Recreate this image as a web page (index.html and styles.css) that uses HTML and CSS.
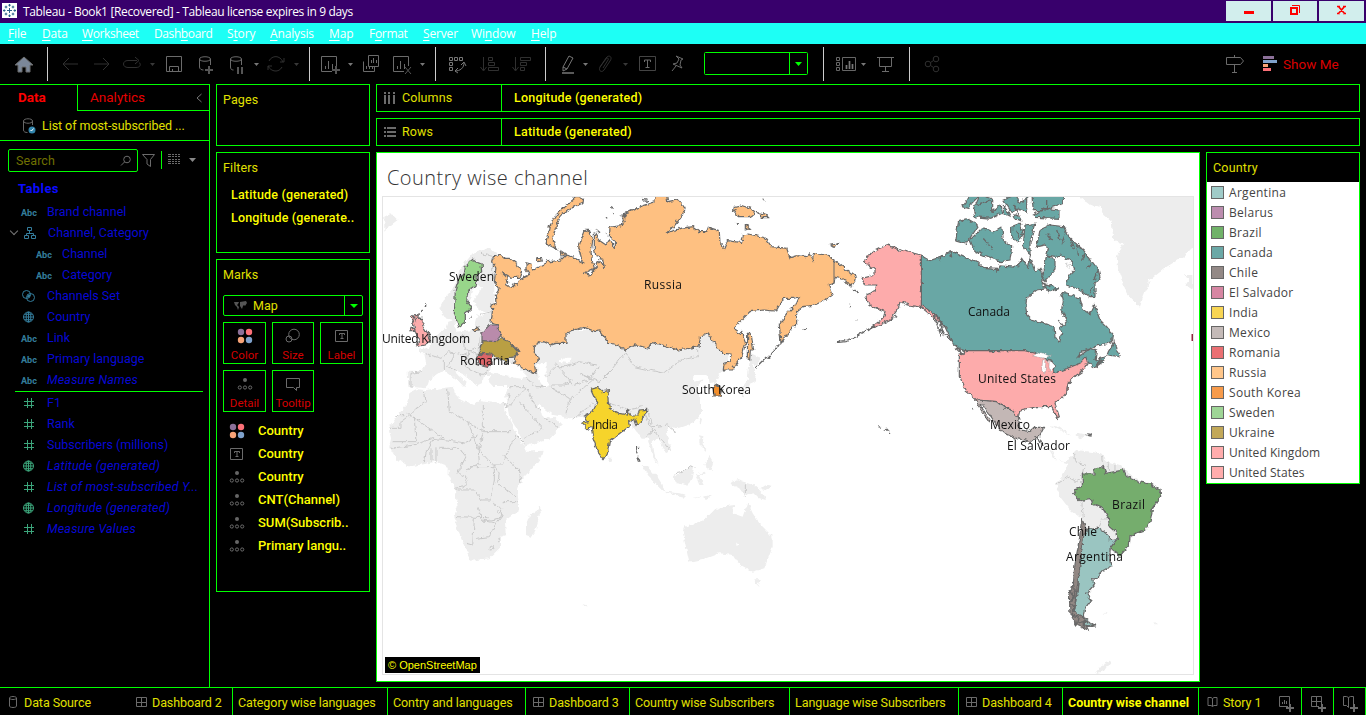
FILE: index.html
```html
<!DOCTYPE html>
<html lang="en">
<head>
<meta charset="utf-8">
<title>Tableau - Book1</title>
<link rel="stylesheet" href="styles.css">
</head>
<body>
<svg class="defs" aria-hidden="true">
  <defs>
    <filter id="coast" x="-2%" y="-2%" width="104%" height="104%" color-interpolation-filters="sRGB"><feTurbulence type="fractalNoise" baseFrequency="0.22" numOctaves="2" seed="4"/><feDisplacementMap in="SourceGraphic" scale="5" xChannelSelector="R" yChannelSelector="G"/></filter>
    <symbol id="abc" viewBox="0 0 18 14"><text x="1" y="11" class="abc-text" textLength="16" lengthAdjust="spacingAndGlyphs">Abc</text></symbol>
    <symbol id="hash" viewBox="0 0 18 14"><path d="M7.500 2v10M11.500 2v10M4 5.500h10M4 9.500h10" class="hash-line"/></symbol>
    <symbol id="globe" viewBox="0 0 18 14"><circle cx="8.500" cy="7" r="5"/><ellipse cx="8.500" cy="7" rx="2.300" ry="5"/><path d="M8.500 2v10M3.500 7h10M4.500 4.300h8M4.500 9.700h8"/></symbol>
    <symbol id="tree" viewBox="0 0 18 14"><path d="M6.500 1.500h4v3h-4zM3.500 9.500h4v3h-4zM10.500 9.500h4v3h-4zM8.500 5v2M5.500 9.500v-2h7v2"/></symbol>
    <symbol id="sets" viewBox="0 0 18 14"><circle cx="6.500" cy="5.500" r="4"/><circle cx="10.500" cy="8.500" r="4"/><path d="M7 8.500c0-2 1-3 3.500-3 0 2-1 3-3.500 3z" class="solid"/></symbol>
    <symbol id="colors" viewBox="0 0 16 16"><circle cx="4" cy="4" r="3.200" fill="#8c7099" stroke="none"/><circle cx="12" cy="4" r="3.200" fill="#fc7078" stroke="none"/><circle cx="4" cy="12" r="3.200" fill="#f7a377" stroke="none"/><circle cx="12" cy="12" r="3.200" fill="#7fa2cc" stroke="none"/></symbol>
    <symbol id="label" viewBox="0 0 16 16"><path d="M1.500 2.500h12v11h-12zM5.500 7V5.500h5V7M8 5.500v5M6.500 10.500h3"/></symbol>
    <symbol id="detail" viewBox="0 0 16 16"><circle cx="8" cy="4" r="2" class="solid"/><circle cx="2.800" cy="11.500" r="1.600"/><circle cx="8" cy="11.500" r="1.600"/><circle cx="13.200" cy="11.500" r="1.600"/></symbol>
    <symbol id="board" viewBox="0 0 12 12"><path d="M.5 1.500h10v9H.5zM5.500 1.500v9M.5 6.500h10"/></symbol>
  </defs>
</svg>

<header class="titlebar">
  <svg class="logo" viewBox="0 0 15 15"><path fill="#fff" d="M0 0h15v15H0z"/><path stroke="#29618b" d="M7.500 5v5M5 7.500h5M7.500 1v2.500M6.300 2.200h2.500M7.500 11.500V14M6.300 12.800h2.500M2.200 6.300v2.500M1 7.500h2.500M12.800 6.300v2.500M11.500 7.500H14M4 2.700v2.600M2.700 4h2.600M11 2.700v2.600M9.700 4h2.600M4 9.700v2.600M2.700 11h2.600M11 9.700v2.600M9.700 11h2.600"/></svg>
  <span class="title-text">Tableau - Book1 [Recovered] - Tableau license expires in 9 days</span>
  <div class="window-buttons">
    <svg viewBox="0 0 45 20"><path d="M18 10h10v3H18z" fill="red"/></svg>
    <svg viewBox="0 0 44 20"><path d="M18 7h6v6h-6z" stroke="red" stroke-width="2"/><path d="M19 4.500h7.500V12" stroke="red"/></svg>
    <svg viewBox="0 0 45 20"><path d="M19.500 5.500l6 7M25.500 5.500l-6 7M18 5.500h3M24 5.500h3M18 12.500h3M24 12.500h3" stroke="red" stroke-width="1.700"/></svg>
  </div>
</header>

<nav class="menubar">
  <span class="m1"><u>F</u>ile</span><span class="m2"><u>D</u>ata</span><span class="m3"><u>W</u>orksheet</span><span class="m4">Dash<u>b</u>oard</span><span class="m5">S<u>t</u>ory</span><span class="m6"><u>A</u>nalysis</span><span class="m7"><u>M</u>ap</span><span class="m8">F<u>o</u>rmat</span><span class="m9"><u>S</u>erver</span><span class="m10">Wi<u>n</u>dow</span><span class="m11"><u>H</u>elp</span>
</nav>

<div class="toolbar">
  <svg width="47" height="34" viewBox="0 47 47 34"><path fill="#7b8799" d="M24 57l9 8h-3v7h-4v-5h-4v5h-4v-7h-3z"/></svg>
  <svg class="tool-group" width="262" height="34" viewBox="48 47 261 34"><g class="dim"><path d="M78 64H63M69 58l-6 6 6 6M94 64h15M103 58l6 6-6 6M137 60.500h-9c-6 0-6 7 0 7h8c5 0 5-4 3-5M135 57l4 3.500-4 3.500"/><path class="fill" d="M150 63h5l-2.500 3zM294 63h5l-2.500 3z"/><path d="M269 61c3-6 11-6 14 1M284 58v4h-4M282 67c-3 6-11 5-14-1M268 70v-4h4"/></g><path d="M166.500 56.500h15v15h-15zM169.500 71.500v-5h9v5M172.500 71v-2M199.500 59v8c0 2 2 3 4 3M210.500 59v6M199.500 59c0-3 11-3 11 0s-11 3-11 0M230.500 59v8c0 2 1 3 3 3M241.500 59v6M230.500 59c0-3 11-3 11 0s-11 3-11 0"/><path d="M209 66v8M205 70h8M238 67v7M242 67v7" stroke-width="2" stroke="#555"/><path class="fill" d="M254 63h5l-2.500 3z"/></svg>
  <svg class="tool-group" width="126" height="34" viewBox="310 47 125 34"><path d="M332 71.500h-10.500v-15h15V67M325.500 69v-3M328.500 69v-8M332.500 69v-5M363.500 61.500v10h11v-5M368.500 55.500h10v11h-10zM366.500 69v-3M369.500 69v-2M372.500 69v-2M371.500 63v-3M373.500 63v-5M376.500 63v-3M404 71.500h-10.500v-15h15V66M397.500 69v-3M400.500 69v-8M404.500 69v-5"/><path d="M336 66v8M332 70h8" stroke="#555" stroke-width="2"/><path d="M405 67l6 7M411 67l-6 7" stroke="#555"/><path class="fill" d="M348 63h5l-2.500 3zM420 63h5l-2.500 3z"/></svg>
  <svg class="tool-group" width="110" height="34" viewBox="436 47 109 34"><path d="M449.500 57.500h3v3h-3zM454.500 57.500h3v3h-3zM459.500 57.500h3v3h-3zM449.500 62.500h3v3h-3zM449.500 67.500h3v3h-3zM464 63c0 5-4 8-9 8M461 65l3-3 2 4M458 68l-3 3 3 2" stroke="#777"/><g class="dim"><path d="M483.500 57v13M480.500 67l3 4 3-4M488.500 57.500h4v3h-4zM488.500 62.500h6v3h-6zM488.500 67.500h10v3h-10zM515.500 57v13M512.500 67l3 4 3-4M520.500 57.500h10v3h-10zM520.500 62.500h6v3h-6zM520.500 67.500h4v3h-4z"/></g></svg>
  <svg class="tool-group" width="278" height="34" viewBox="546 47 277 34"><path d="M569 56l4 2-6 11-4 2v-4zM563 67l4 2" stroke="#777"/><path d="M562 73h12" stroke="#777" stroke-width="1.500"/><path class="fill" d="M583 63h5l-2.500 3z"/><g class="dim"><path d="M600 67l6-9c3-4 7-1 4 3l-6 9c-2 3-6 1-4-3l6-8c2-2 3 0 2 1l-5 8"/><path class="fill" d="M623 63h5l-2.500 3z"/></g><path d="M639.500 56.500h16v14h-16z" stroke="#444"/><path d="M644.500 62v-2h6v2M647.500 60v7M645.500 67.500h4M676 56l7 3-2 1-1 5 2 3-9-4 4-1 2-4zM676 66l-4 5"/><path d="M705.500 52.500h101a1 1 0 0 1 1 1v20a1 1 0 0 1-1 1h-101a1 1 0 0 1-1-1v-20a1 1 0 0 1 1-1zM789.500 52.500v22" stroke="#0f0"/><path d="M795 62h7l-3.500 4z" fill="#0f0" stroke="none"/></svg>
  <svg class="tool-group" width="86" height="34" viewBox="824 47 85 34"><path d="M836.500 57.500h3v3h-3zM836.500 62.500h3v3h-3zM836.500 67.500h3v3h-3zM842.500 57.500h13v13h-13z" stroke="#666"/><path d="M846.500 69v-4M849.500 69v-8M852.500 69v-5" stroke="#777" stroke-width="1.700"/><path class="fill" d="M861 63h5l-2.500 3z"/><path d="M877 57.500h17M879.500 58v8.500h12V58M885.500 67v4M882 71.500h7"/></svg>
  <svg class="tool-group last" width="317" height="34" viewBox="910 47 316 34"><g class="dim"><circle cx="928" cy="64" r="2.800"/><circle cx="936" cy="59" r="2.800"/><circle cx="936" cy="69" r="2.800"/><path d="M930.500 62.500l3-2M930.500 65.500l3 2"/></g></svg>
  <svg class="guide-icon" width="37" height="34" viewBox="1226 47 37 34"><path d="M1234.500 55v2M1226.500 57.500h14l3 3.500-3 3.500h-14zM1234.500 65v7M1232 72.500h5"/></svg>
  <svg width="17" height="34" viewBox="1263 47 17 34" class="showme-icon"><path fill="#8c7099" d="M1263 56h11v3h-11z"/><path fill="#7fa2cc" d="M1263 60h14v3h-14z"/><path fill="#f7a377" d="M1263 64h5v3h-5z"/><path fill="#fc7078" d="M1263 68h8v3h-8z"/></svg>
  <span class="showme">Show Me</span>
</div>

<main class="workspace">
  <aside class="data-pane">
    <div class="pane-tabs"><b>Data</b><div class="analytics"><span>Analytics</span><svg width="6" height="10"><path d="M5.500 1L1 5l4.500 4" stroke="#777"/></svg></div></div>
    <div class="source"><svg width="15" height="16"><path d="M1.500 3v9c0 2 2 2.500 4 2.500M10.500 3v4M1.500 3c0-3 9-3 9 0s-9 3-9 0" stroke="#666"/><circle cx="10" cy="12" r="3.500" fill="#3285ad" stroke="none"/><path d="M8.500 12l1 1 2-2.500" stroke="#fff"/></svg><span>List of most-subscribed ...</span></div>
    <div class="search-row">
      <div class="search"><span>Search</span><svg width="12" height="12"><circle cx="7" cy="4.500" r="3.300"/><path d="M4.500 7L1 10.500"/></svg></div>
      <svg width="14" height="22"><path d="M.5 5.500h12L8.500 10.500v7L5 15v-4.500z"/></svg>
      <i></i>
      <svg width="12" height="22"><path d="M0 5.500h12M0 7.500h12M0 10.500h12M0 12.500h12M0 14.500h12" stroke-dasharray="3 1 2 1 2 1 2 0"/></svg>
      <svg width="7" height="22" class="caret"><path d="M0 9h7l-3.500 4z" fill="#888" stroke="none"/></svg>
    </div>
    <div class="tables">Tables</div>
    <ul class="fields dims">
      <li><svg><use href="#abc"/></svg><span>Brand channel</span></li>
      <li class="open"><svg><use href="#tree"/></svg><span>Channel, Category</span></li>
      <li class="child"><svg><use href="#abc"/></svg><span>Channel</span></li>
      <li class="child"><svg><use href="#abc"/></svg><span>Category</span></li>
      <li><svg><use href="#sets"/></svg><span>Channels Set</span></li>
      <li><svg><use href="#globe"/></svg><span>Country</span></li>
      <li><svg><use href="#abc"/></svg><span>Link</span></li>
      <li><svg><use href="#abc"/></svg><span>Primary language</span></li>
      <li><svg><use href="#abc"/></svg><em>Measure Names</em></li>
    </ul>
    <ul class="fields measures">
      <li><svg><use href="#hash"/></svg><span>F1</span></li>
      <li><svg><use href="#hash"/></svg><span>Rank</span></li>
      <li><svg><use href="#hash"/></svg><span>Subscribers (millions)</span></li>
      <li><svg><use href="#globe"/></svg><em>Latitude (generated)</em></li>
      <li><svg><use href="#hash"/></svg><em>List of most-subscribed Y...</em></li>
      <li><svg><use href="#globe"/></svg><em>Longitude (generated)</em></li>
      <li><svg><use href="#hash"/></svg><em>Measure Values</em></li>
    </ul>
  </aside>

  <section class="cards">
    <div class="card pages"><h3>Pages</h3></div>
    <div class="card filters"><h3>Filters</h3><p>Latitude (generated)</p><p>Longitude (generate..</p></div>
    <div class="card marks">
      <h3>Marks</h3>
      <div class="mark-type"><svg width="13" height="10"><path fill="#555" d="M0 1h5l-1 2-1 1 2 2-1 3-1-3-2-2zM6 1l6-1 1 2-2 3-1-1-1 1-1 3-2-3z"/></svg><span>Map</span><i></i></div>
      <div class="mark-grid">
        <div><svg><use href="#colors"/></svg>Color</div>
        <div><svg viewBox="0 0 16 16"><circle cx="9" cy="6.500" r="5.300"/><circle cx="4" cy="11" r="3"/></svg>Size</div>
        <div><svg><use href="#label"/></svg>Label</div>
        <div><svg><use href="#detail"/></svg>Detail</div>
        <div><svg viewBox="0 0 16 16"><path d="M1.500 2.500h13v9h-3v3l-3-3h-7z"/></svg>Tooltip</div>
      </div>
      <ul class="pills">
        <li><svg><use href="#colors"/></svg>Country</li>
        <li><svg><use href="#label"/></svg>Country</li>
        <li><svg><use href="#detail"/></svg>Country</li>
        <li><svg><use href="#detail"/></svg>CNT(Channel)</li>
        <li><svg><use href="#detail"/></svg>SUM(Subscrib..</li>
        <li><svg><use href="#detail"/></svg>Primary langu..</li>
      </ul>
    </div>
  </section>

  <section class="sheet">
    <div class="shelf"><div><svg width="12" height="12"><path d="M1 0v2M5 0v2M10 0v2M1 3v9M5 3v9M10 3v9" stroke-width="2"/></svg>Columns</div><b>Longitude (generated)</b></div>
    <div class="shelf"><div><svg width="12" height="12"><path d="M0 2h2M0 6h2M0 10h2M3 2h9M3 6h9M3 10h9" stroke-width="2"/></svg>Rows</div><b>Latitude (generated)</b></div>
    <div class="view-row">
      <div class="viz">
        <h1>Country wise channel</h1>
        <svg class="map" viewBox="383 197 810 477">
          <g filter="url(#coast)">
          <g class="land" transform="translate(376 350) scale(.33333)">
            <path d="M190-125L205-155 235-190 250-240 290-290 340-307 365-290 355-200 355-115 320-115 300-130 295-150 318-185 300-200 290-185 275-130 250-70 232-90 210-95z"/>
            <path d="M345-115L300-95 292-60 240-55 235-90 217-85 210-65 190-50 165-30 160-10 130 0 145 15 150 40 135 65 95 65 97 110 120 112 145 115 155 105 160 90 180 75 205 60 225 75 245 90 265 112 272 98 245 75 240 62 260 70 285 90 300 108 320 98 325 75 345 75 338 95 350 108 400 108 387 135 400 200 430 250 445 290 520 265 558 225 535 200 505 205 482 165 490 165 530 195 580 205 620 200 700 180 760 215 785 250 800 270 815 265 830 320 848 345 835 310 830 275 845 260 870 310 885 290 870 250 880 230 905 235 950 220 975 190 975 150 955 115 985 85 955 95 950 75 990 75 1000 95 1010 100 1030 130 1020 100 1030 75 1042 62 1065 0 1000-60 500-60z"/>
            <path d="M120 118L150 120 235 110 235 130 255 150 295 165 310 150 385 160 385 180 400 210 425 255 445 290 450 305 500 302 495 320 470 355 430 395 425 430 430 480 390 510 392 555 375 560 375 590 340 625 285 632 270 600 245 540 235 500 245 470 235 410 218 375 218 350 180 335 100 350 60 325 40 290 45 265 38 235 70 190 90 165 105 125z"/>
            <path d="M490 467l5 15-20 70-10 8-15-5 0-30 10-30 15-5zM920 545L925 530 985 510 1015 480 1040 470 1075 465 1070 490 1100 500 1115 455 1130 490 1150 520 1190 560 1190 590 1165 655 1130 665 1085 640 1070 615 1030 610 990 625 940 635 932 600zM1135 685l20 0-8 25z"/>
            <path d="M1100 110l15-20 5-50 10-5 10 40-5 25-25 10-10 30-10-20zM1120 35l5-25 30 15-15 20zM970 205l8 5-5 20zM970 255l12 3-2 25 15 15-5 5-20-20zM985 345l15-30 12 20-8 25zM797 345l20 5 30 35 25 40-15-5-30-30zM893 375l15 0 20-15 15-15 12 5-10 40-15 15-30-5zM960 375l25-10 5 5-22 5 15 30-10 0-8-20zM1060 400l25-10 50 15 25 25 10 20-20-5-15-15-30 5-15-20-20-10zM870 425l40 5 20 5-5 5-50-10zM700 320l8 15-8 5-6-10zM950 440l25-2-5 5zM980 440l30-5-20 12zM1150 415l25-10 10 3-20 15zM620 763l12 3-8 4zM1230 445l15 8zM25-380l0-20 20-10 20 20-20 15-20 20z"/>
          </g>
          <g class="land" transform="translate(850 190) scale(.33333)"><path d="M690 22L720 45 750 50 760 75 785 95 790 150 820 160 800 200 805 240 830 310 870 350 880 320 900 270 950 230 1000 200 1030 170 1040 170 1040 10 690 10zM1005 255l25 0 0 45-25-15 10-15zM595 705l30 5 40 28-30-15zM675 735l15-5 25 5-25 10zM560 755l40 20 20 35 50 15 5-10-60-5-25-45z"/></g>
          <g class="land" transform="translate(1020 430) scale(.33333)"><path d="M150 80L172 60 240 70 265 95 300 105 315 120 420 200 300 378 270 360 190 300 185 265 155 245 120 200 108 160 130 135zM250 552l10-8-5 10zM400 575l12 8-8 0zM225 730l20-25 30-12-20 30z"/></g>
          <g fill="#fff" transform="translate(376 350) scale(.33333)"><path d="M340 65L350 35 375 25 420 45 455 80 440 87 370 75zM482 45l30-10 0 30-5 10 12 35-15 5-15-25zM550 35l20-15 20 0-15 20zM225 85l-5-10-15-10 0 15-8 15zM1080 580l8 8-6 0z"/></g>
          <g class="borders" transform="translate(376 350) scale(.33333)"><path d="M145 125l5 30-35 25-20 20-20 15 0 20-35 0M95 190l115 80M55 197h30M215 115l5 70 55 30 45 30M322 165v80h82M385 160l5 15M275 215l30 80M115 200l5 75-70 0M45 295l70-10 55-20 45 5 55 10 35-25M170 270l-20 40-5 25M180 295l0 45M165 295l0 40M190 295l60 0 20 25-25 50M305 280l5 60-40 20M320 250l-10 50 40 45 30 0 20-50 20-40 25 25M380 315l15 15 35 30 5 40M355 345l15 25-5 30 55 40M280 350l75 0 0 40-10 60-30 0-20-30-50 0M250 370l25 15-10 25-30 5M350 460l30 15-10 30-50 10-15-45M380 455l45 0M240 500l95 3M295 505l-5 80-20-5M320 510l40 10-20 40-40 5M365 515l15-20-20-15M340 590a7 7 0 1 0 10-3zM365 565l5 10M135 65l-30 5 0 40M145 10l50 15 25-20 40 10 40-20M205 30l0 30M235 10l-20 40 30 15M260-45l5 40 40 20M310-40l-5 60 40 30M280 0l-10 50 45 25 30-15M400 110l50 0 30 60 15 10M400 130l-10 45 60-60M430 155l70 80-55 30M450 80l30 30 30 0M520 110l60 35-10 45M525 105l40 0 25-15M510 80l30-30 30 0 40-15 50 10M610 70l40 20-70 60M620 75l50 20 40-40 35-45M540 40l50 65 50-15 30-40M745 0l30 50 90 20 50-40 50-10 0-20M670 180l-20-20-60 50M700 160l60 20 40-10M780 230l20-50 30 60-15 20M820 190l10 40 45-5 25 20M835 240l25 35 20 25M1108 400v40M895 372l25-5 20-20 15 5M505 205l40 25M345-115l-40 10M350-210l0-70-35-10"/></g>
          <g class="borders" transform="translate(1020 430) scale(.33333)"><path d="M160 70l5 25 30 10-5 30M110 165l30-25 30 15 15-10M185 210l5 55M245 80l5 35M265 100l0 25M285 105l0 20M235 295l10-25 20 0M268 330l20-5M270 360l30 18"/></g>

          <g transform="translate(376 190) scale(.33333)">
            <path class="russia" d="M355 200L370 193 385 205 400 205 425 225 437 245 430 262 405 262 375 245 392 262 395 275 390 283 405 293 413 290 410 282 425 285 430 270 445 262 460 255 450 240 450 218 465 222 470 240 480 235 505 222 520 215 555 210 570 195 590 200 620 220 608 170 625 125 640 120 650 150 645 190 650 215 655 235 625 250 640 257 662 230 668 210 685 235 680 205 660 200 655 175 655 130 668 150 690 165 700 150 718 175 718 155 700 140 702 112 745 105 737 88 752 70 792 50 837 35 837 5 870 5 875 35 907 28 927 55 917 80 897 105 870 130 912 115 952 110 972 125 992 125 997 112 1030 122 1032 160 1044 175 1054 152 1097 158 1102 135 1117 132 1167 143 1187 170 1232 175 1242 203 1262 197 1292 200 1300 192 1310 212 1312 190 1352 195 1374 210 1412 240 1442 262 1437 278 1422 288 1407 270 1377 262 1374 280 1357 285 1369 318 1317 345 1282 350 1262 365 1262 400 1237 425 1215 460 1210 405 1232 370 1262 340 1270 320 1252 325 1222 325 1200 363 1162 360 1122 365 1072 415 1097 430 1109 460 1097 500 1067 540 1042 540 1044 520 1062 515 1065 492 1042 490 1017 465 997 432 974 437 969 470 907 480 827 455 817 475 780 465 747 480 717 462 697 460 672 423 658 425 625 412 590 420 570 430 570 460 540 460 525 465 500 455 475 470 475 490 490 505 475 520 480 553 440 535 412 520 428 485 420 472 375 440 372 425 365 405 345 400 350 355 345 345 360 340 358 315 368 300 355 275 360 235 350 215z"/>
            <path class="russia" d="M510 160L520 110 540 75 565 50 600 22 620 25 618 40 585 55 555 75 540 110 530 140 535 165 543 178zM483 203l10 0 3 10-10 2zM555 183l15 10-12 5zM290 418l12-7 10 8-18 3zM630 118l10 0-3 8zM1075 50l20-5 30 10 12 15-15 10-35 0-15-15zM1145 68l25 5 5 10-15 0zM1108 105l15 10-15 5zM1365 165l25-5-15 12zM1115 430l10 0 8 50-10 0-2 30-7-5z"/>
            <path class="scribble" d="M705 50l8 5M710 70l3 3M735 80l12-10-2 25M690 85l3 3M660 118l10 8-8 3M690 128l2 3M800 25l12 3M805 32l8 3M1075 60l3 3M1080 98l3 3M1160 30l5 0M1430 300l15 5M1420 345l3 3M1200 475l10-15M1165 510l15-10M1140 535l15-15M1150 525l50-50M1280 415l10 5M1440 390l3 3"/>
            <path class="sweden" d="M290 208L300 215 315 220 317 245 300 260 302 285 275 305 272 335 285 355 268 370 268 395 248 410 235 370 238 300 248 270 265 250 268 230z"/>
            <path class="belarus" d="M318 430L340 405 365 405 375 435 360 455 318 455z"/>
            <path class="ukraine" d="M310 480L320 452 360 455 375 445 400 455 428 485 420 500 390 505 395 520 350 495 310 495z"/>
            <path class="romania" d="M302 505L320 490 345 492 352 520 335 532 308 525z"/>
            <path class="pink" d="M105 380L130 375 128 385 142 385 140 405 155 430 160 455 145 465 120 470 130 455 120 430 110 395zM105 415l12 0-3 10-12 0z"/><path class="scribble" d="M135 365l5-5M147 350l3-7M110 375l10 25M115 390l10-10M280 385l5-8"/>
          </g>
          <path class="russia korea" d="M718 385l4 4-2 7-6 0-1-8z"/>
          <path class="india" transform="translate(376 350) scale(.33333)" d="M645 118L665 112 680 125 700 122 695 140 700 175 730 190 755 195 755 180 765 195 785 195 790 180 812 178 812 190 800 200 795 220 782 225 775 205 758 215 760 230 745 240 700 275 695 305 682 328 665 305 650 260 645 230 635 238 618 220 635 215 625 195 650 185 665 155 655 140z"/>
          <path class="scribble" transform="translate(376 350) scale(.33333)" d="M785 290l-3 20M785 320l7 18"/>
          <g transform="translate(850 190) scale(.33333)">
            <path class="canada" d="M214 197L240 212 275 200 305 185 350 205 385 215 400 232 440 235 440 250 450 228 500 232 515 205 535 235 540 205 555 245 570 235 580 265 575 290 600 295 560 300 530 325 527 350 530 375 545 390 580 400 612 410 615 440 628 458 635 430 630 415 650 395 635 360 640 330 635 310 665 315 690 325 700 360 720 372 733 345 750 390 770 410 790 435 788 455 735 470 695 485 680 505 720 475 740 480 735 510 765 500 760 515 730 535 720 520 705 500 690 520 640 540 610 550 615 530 600 510 565 500 525 482 343 482 310 465 285 410 250 370 214 350z"/>
            <path class="canada" d="M560 170L570 120 600 105 640 110 660 145 700 180 715 200 745 240 750 260 735 280 735 320 720 320 690 300 650 285 650 270 675 240 665 215 635 195 620 200 590 195 595 180 585 165zM360 150L395 115 430 125 455 110 460 150 485 170 480 210 450 215 400 195 375 185zM325 95L355 88 385 105 350 160 318 150zM485 110l25-10 10 30-15 30-20-20zM525 105l30-5-15 60 0 35-20-30zM575 260l15-65 25 15 0 30-30 35zM580 280l45 15-25 10zM335 50l25-35 30 0-25 25-10 15zM370 60l20-45 35 10 0 40 25-20 5 25-30 15-50-5zM460 30l40-15 10 27 20-27 0 52-25-10-20 10zM545 10l95 0 0 30-60 22-30 0zM550 75l35-20 45 5 0 25-75-3zM460 48l15 18 5 15-20-10zM490 80l15-8 10 20-20-4zM775 485l18-28 5 20 14 20-8 5-34-5zM750 510l10 0-20 15z"/>
            <path class="us" d="M328 490L343 492 343 482 525 482 560 492 575 500 600 510 615 530 610 550 640 540 690 520 708 500 712 520 695 545 680 555 655 580 655 600 640 620 615 640 628 680 620 685 605 650 560 650 510 660 505 680 480 655 465 655 440 635 380 630 345 600 328 560z"/>
            <path class="us" d="M214 195L150 180 110 165 60 190 42 215 75 240 75 255 35 265 45 285 80 285 75 305 48 315 50 335 70 350 105 365 100 385 60 415 85 408 120 390 145 355 150 335 175 345 214 352 285 410 250 370 214 345z"/>
            <path class="mexico" d="M380 630L440 635 465 655 480 655 505 680 510 720 540 725 555 712 582 712 570 735 545 755 500 745 455 725 430 690 400 645 390 645 420 690 415 695 385 650z"/>
            <path d="M548 498l20-12 35 12-20 7zM578 510l10-3-3 42-10-7zM598 510l17 20-15 15-3-15zM645 225l18-5-5 15z" fill="#fff" stroke="#777"/>
            <path class="scribble" d="M-40 455l25-3 30-10 45-27M120 390l20-15M250 370l15 45 15 15-10-35 15 15M258 375l20 35M268 420l5 20M285 430l25 30M315 460l25 35-25-22M275 195l-5 15M300 180l5 25M590 130l15 20M620 120l10 30M645 135l-10 25M660 145l10 30M680 165l5 30M705 190l-10 20M725 220l-15 15M745 240l-15 30M730 290l-15 20M380 45l40-15M490 45l20 30M590 30l0 25M495 120l15 20M400 145l25 30M370 655l-3 3M85 710l8 2M105 715l15 15M710 736l15 2M550 740l20 10 10 20M625 390l10 15M735 530l20-20M650 600l5-25"/>
          </g>
          <g transform="translate(1020 430) scale(.33333)">
            <path class="brazil" d="M187 132L222 132 222 118 250 110 258 130 300 122 310 115 320 140 355 155 390 162 420 180 422 200 398 235 390 275 375 300 350 308 330 320 328 345 300 378 270 355 292 325 288 308 268 290 265 262 248 235 218 222 215 208 180 215 160 195 165 180 187 172z"/>
            <path class="argentina" d="M200 298L235 295 268 315 268 330 292 325 270 355 270 385 272 410 238 430 235 445 218 448 222 465 200 490 213 510 195 535 190 555 200 575 228 588 190 590 162 545 170 500 180 400 190 320z"/>
            <path class="chile" d="M185 265L195 290 200 300 190 320 180 400 172 470 162 545 190 560 195 580 205 600 170 585 150 550 148 500 160 460 165 400 178 330z"/>
            <path class="scribble" d="M150 480l10 20-10 20 15 10-10 25 20 5-5 20 20-5 0 20 10-25-15-10M160 460l5 40-10 15M218 460l8 2M205 588l20-2M200 12l15 2"/>
          </g>
          </g>
          <path class="straight" d="M834 260v23M921.500 255.500v51M964 350.500h61"/>
          <path d="M1192.500 334v7" stroke="#90243e" stroke-width="2"/>
          <g class="map-labels">
            <text x="449" y="281" textLength="45">Sweden</text><text x="382" y="343" textLength="88">United Kingdom</text><text x="460" y="365" textLength="50">Romania</text><text x="644" y="289" textLength="38">Russia</text><text x="682" y="394" textLength="69">South Korea</text><text x="592" y="429" textLength="26">India</text><text x="968" y="316" textLength="42">Canada</text><text x="978" y="383" textLength="78">United States</text><text x="990" y="429" textLength="40">Mexico</text><text x="1007" y="450" textLength="63">El Salvador</text><text x="1112" y="509" textLength="33">Brazil</text><text x="1069" y="536" textLength="28">Chile</text><text x="1066" y="561" textLength="57">Argentina</text>
          </g>
        </svg>
        <span class="credit">© OpenStreetMap</span>
      </div>
      <div class="legend"><h3>Country</h3><ul>
        <li><i class="argentina"></i>Argentina</li><li><i class="belarus"></i>Belarus</li><li><i class="brazil"></i>Brazil</li><li><i class="canada"></i>Canada</li><li><i class="chile"></i>Chile</li><li><i class="salvador"></i>El Salvador</li><li><i class="india"></i>India</li><li><i class="mexico"></i>Mexico</li><li><i class="romania"></i>Romania</li><li><i class="russia"></i>Russia</li><li><i class="korea"></i>South Korea</li><li><i class="sweden"></i>Sweden</li><li><i class="ukraine"></i>Ukraine</li><li class="tight"><i class="us"></i>United Kingdom</li><li class="tight"><i class="us"></i>United States</li>
      </ul></div>
    </div>
  </section>
</main>

<footer class="tabs">
  <div class="w129 plain"><svg viewBox="0 0 12 12"><path d="M1.500 2v8c0 2 7 2 7 0V2M1.500 2c0-2 7-2 7 0s-7 2-7 0"/></svg><span>Data Source</span></div>
  <div class="w104"><svg><use href="#board"/></svg><span>Dashboard 2</span></div>
  <div class="w155"><span>Category wise languages</span></div>
  <div class="w138"><span>Contry and languages</span></div>
  <div class="w104"><svg><use href="#board"/></svg><span>Dashboard 3</span></div>
  <div class="w160"><span>Country wise Subscribers</span></div>
  <div class="w170"><span>Language wise Subscribers</span></div>
  <div class="w104"><svg><use href="#board"/></svg><span>Dashboard 4</span></div>
  <div class="w136 active"><span>Country wise channel</span></div>
  <div class="w71 plain"><svg viewBox="0 0 12 12"><path d="M1 1.500h3l1.500 1 1.500-1h3v8H7l-1.500 1-1.500-1H1zM5.500 2.500v8"/></svg><span>Story 1</span></div>
  <div class="w32 add"><svg viewBox="0 0 18 18"><path d="M11 12.500H2.500v-10h10V10M5.500 10V8M7.500 10V6M9.500 10V7"/><path d="M13 10v8M9 14h8" stroke-width="2"/></svg></div>
  <div class="w32 add"><svg viewBox="0 0 18 18"><path d="M10 12.500H2.500v-10h10V10M7.500 2.500v10M2.500 7.500h10"/><path d="M13 10v8M9 14h8" stroke-width="2"/></svg></div>
  <div class="w32 add"><svg viewBox="0 0 18 18"><path d="M2.500 2.500h3l2 1 2-1h3V10M2.500 2.500v9h3l2 2V3.500"/><path d="M13 10v8M9 14h8" stroke-width="2"/></svg></div>
</footer>
</body>
</html>
```
FILE: styles.css
```css
* { box-sizing: border-box; }
body { margin: 0; width: 1366px; height: 715px; overflow: hidden; background: #000; color: #e0e000; font-family: Roboto, sans-serif; font-size: 12.5px; display: flex; flex-direction: column; }
h1, h3, p, ul { margin: 0; padding: 0; font-weight: 400; }
ul { list-style: none; }
svg { flex: none; fill: none; stroke: #6b6b6b; stroke-width: 1; }
.defs { position: absolute; width: 0; height: 0; }
.solid { fill: currentColor; stroke: none; }

.titlebar { height: 23px; background: #38006c; display: flex; align-items: center; padding-left: 2px; color: #fff; font: 12px "Open Sans", sans-serif; }
.logo { width: 15px; height: 15px; margin-right: 6px; margin-bottom: 2px; stroke: none; }
.title-text { letter-spacing: -.35px; }
.window-buttons { margin: 1px 2px auto auto; display: flex; gap: 2px; }
.window-buttons svg { height: 20px; width: 45px; background: #d2eeed; stroke: none; }
.window-buttons svg:nth-child(2) { width: 44px; }

.menubar { height: 21px; background: #1dfff5; display: flex; align-items: center; padding-left: 8px; color: #fff; font: 12px "Open Sans", sans-serif; white-space: nowrap; }
.menubar u { text-underline-offset: 2px; }
.menubar span { flex: none; letter-spacing: -.15px; }
.menubar .m3 { letter-spacing: -.4px; }
.menubar .m4 { letter-spacing: -.4px; }
.menubar .m8 { letter-spacing: -.3px; }
.m1 { width: 34px; } .m2 { width: 40px; } .m3 { width: 72px; } .m4 { width: 73px; } .m5 { width: 43px; } .m6 { width: 59px; } .m7 { width: 40px; } .m8 { width: 54px; } .m9 { width: 48px; } .m10 { width: 60px; }

.toolbar { height: 40px; display: flex; align-items: center; }
.toolbar .fill { fill: #777; stroke: none; }
.toolbar .dim { stroke: #303030; }
.toolbar .dim .fill { fill: #383838; }
.tool-group { border-left: 1px solid #ccc; }
.showme-icon { stroke: none; }
.showme { color: #d90000; font-size: 13.5px; margin-left: 3px; line-height: 16px; margin-bottom: 1px; }

.workspace { height: 603px; display: flex; }
.data-pane { width: 210px; border: 1px solid #0f0; border-width: 1px 1px 0 0; flex: none; }
.pane-tabs { height: 26px; display: flex; color: #e60000; font-size: 13.5px; line-height: 25px; }
.pane-tabs b { width: 77px; padding-left: 18px; color: #f00; }
.analytics { flex: 1; border: 1px solid #0f0; border-width: 0 0 1px 1px; display: flex; justify-content: space-between; align-items: center; padding: 0 7px 0 12px; }
.source { height: 30px; border-bottom: 1px solid #0f0; display: flex; align-items: center; padding-left: 22px; gap: 5px; letter-spacing: -.06px; }
.search-row { display: flex; padding: 8px 0 0 8px; height: 31px; }
.search { width: 130px; height: 23px; border: 1px solid #0f0; border-radius: 2px; display: flex; align-items: center; justify-content: space-between; padding: 0 5px 0 7px; color: #707000; margin-right: 4px; letter-spacing: .1px; }
.search-row i { width: 1px; height: 18px; background: #0f0; margin: 2px 6px 0 5px; }
.search-row .caret { margin-left: 9px; }
.tables { color: #0b0bff; font-weight: 700; height: 29px; line-height: 33px; padding-left: 18px; font-size: 13px; letter-spacing: .4px; }
.fields { color: #0808d4; letter-spacing: 0; }
.fields em { letter-spacing: .18px; }
.fields li { height: 21px; display: flex; align-items: center; padding-left: 20px; gap: 9px; white-space: nowrap; }
.fields .child { padding-left: 35px; }
.fields svg { width: 18px; height: 14px; stroke: #347d9c; color: #347d9c; }
.fields .open::before { content: ""; width: 5px; height: 5px; border: 1px solid #777; border-width: 0 1px 1px 0; transform: rotate(45deg); margin: 0 -5px 3px -9px; }
.dims { height: 189px; margin-bottom: 1px; }
.abc-text { font: 700 9px Roboto, sans-serif; fill: #347d9c; stroke: none; }
.measures::before { content: ""; display: block; width: 188px; height: 1px; margin-left: 15px; background: #0f0; }
.measures svg { stroke: #3ca57b; }

.cards { width: 154px; margin-left: 6px; display: flex; flex-direction: column; flex: none; gap: 6px; }
.card { width: 154px; border: 1px solid #0f0; padding: 7px 6px 0; flex: none; }
.card h3 { font-size: 12.5px; line-height: 15px; letter-spacing: .1px; }
.pages { height: 62px; }
.filters { height: 101px; }
.filters h3 { margin-bottom: 8px; }
.filters p { padding-left: 8px; height: 23px; line-height: 23px; color: #ff0; font-weight: 500; letter-spacing: .18px; white-space: nowrap; }
.marks { height: 333px; }
.mark-type { height: 21px; width: 140px; margin: 13px 0 6px; border: 1px solid #0f0; border-radius: 2px; display: flex; align-items: center; padding-left: 10px; gap: 6px; }
.mark-type svg { stroke: none; }
.mark-type i { margin-left: auto; width: 18px; height: 19px; border-left: 1px solid #0f0; display: flex; align-items: center; justify-content: center; }
.mark-type i::after { content: ""; border: 4px solid transparent; border-top-color: #0f0; border-bottom: 0; }
.mark-grid { display: grid; grid-template-columns: 43px 42px 43px; gap: 6px; width: 140px; }
.mark-grid div { height: 42px; border: 1px solid #0f0; display: flex; flex-direction: column; align-items: center; justify-content: space-between; padding: 5px 0 1px; color: #d40000; font-size: 11.500px; line-height: 14px; white-space: nowrap; }
.mark-grid svg, .pills svg { width: 16px; height: 16px; color: #666; }
.pills { padding: 7px 0 0 6px; }
.pills li { height: 23px; display: flex; align-items: center; gap: 13px; color: #ff0; font-weight: 500; font-size: 13px; white-space: nowrap; }

.sheet { margin-left: 6px; width: 984px; display: flex; flex-direction: column; gap: 6px; flex: none; }
.shelf { height: 28px; border: 1px solid #0f0; display: flex; align-items: center; flex: none; }
.shelf > div { width: 125px; height: 26px; border-right: 1px solid #0f0; display: flex; align-items: center; padding: 0 0 1px 7px; gap: 6px; letter-spacing: .1px; }
.shelf b { color: #ff0; font-weight: 500; padding: 0 0 1px 12px; font-size: 12.5px; letter-spacing: .2px; }
.view-row { display: flex; gap: 6px; align-items: flex-start; }
.viz { width: 824px; height: 530px; border: 1px solid #0f0; background: #fff; padding: 9px 5px 0; position: relative; }
.viz h1 { font: 300 20px/34px "Open Sans", sans-serif; color: #333; padding-left: 5px; letter-spacing: .45px; margin: -1px 0 1px; }
.map { display: block; width: 812px; height: 479px; border: 1px solid #e4e4e4; stroke: none; }
.credit { position: absolute; left: 8px; top: 504px; width: 95px; height: 16px; padding-left: 3px; background: #000; color: #ff0; font: 11px/16px "Liberation Sans", sans-serif; white-space: nowrap; }
.land path { fill: #ededed; }
.borders path { stroke: #c9c9c9; fill: none; vector-effect: non-scaling-stroke; }
.scribble { stroke: #686868; stroke-width: 4; }
.straight { stroke: #686868; }
.map .russia, .map .canada, .map .us, .map .mexico, .map .brazil, .map .argentina, .map .chile, .map .india, .map .sweden, .map .belarus, .map .ukraine, .map .romania, .map .pink { stroke: #686868; stroke-width: 1.2; vector-effect: non-scaling-stroke; }
.map-labels { font: 12px "Open Sans", sans-serif; fill: #111; }
.legend { width: 154px; height: 332px; border: 1px solid #0f0; background: #fff; }
.legend h3 { height: 29px; background: #000; line-height: 30px; padding-left: 6px; letter-spacing: .2px; font-size: 12.5px; }
.legend li { height: 20px; display: flex; align-items: center; gap: 5px; padding-left: 4px; color: #444; font: 12px "Open Sans", sans-serif; letter-spacing: .3px; }
.legend .tight { letter-spacing: .05px; }
.legend i { width: 13px; height: 13px; border: 1px solid #666; }
.argentina { fill: #9ac5c1; background: #a0cbc8; }
.belarus { fill: #b98bab; background: #bc8daf; }
.brazil { fill: #75ad6d; background: #71b269; }
.canada { fill: #69a7a5; background: #6ba8a6; }
.chile { fill: #918783; background: #938986; }
.salvador { background: #d686a2; }
.india { fill: #f6d42b; background: #f8d554; }
.mexico { fill: #c3b7b5; background: #c4bab8; }
.romania { fill: #dd6568; background: #ea7073; }
.russia { fill: #fec081; background: #ffc68a; }
.korea { fill: #f28e2b; background: #f79b4b; }
.sweden { fill: #98d68a; background: #9fd596; }
.ukraine { fill: #b99f43; background: #c2a859; }
.us, .pink { fill: #fdabab; background: #ffacac; }

.tabs { height: 28px; border-top: 1px solid #0f0; display: flex; font-size: 12.5px; white-space: nowrap; letter-spacing: -.07px; }
.tabs div { border-right: 1px solid #0f0; display: flex; align-items: center; padding: 2px 0 0 5px; gap: 4px; flex: none; }
.tabs .plain { border-color: transparent; padding-left: 8px; }
.tabs svg { width: 12px; height: 12px; margin-bottom: 2px; }
.tabs .add { padding-left: 7px; }
.tabs .add svg { width: 18px; height: 18px; margin: 0; }
.tabs .w104 { padding-left: 7px; }
.w129 { width: 129px; } .w104 { width: 104px; } .w155 { width: 155px; } .w138 { width: 138px; } .w160 { width: 160px; } .w170 { width: 169px; } .w136 { width: 136px; } .w71 { width: 71px; } .w32 { width: 32px; }
.tabs .active { color: #ff0; font-weight: 700; letter-spacing: .02px; }
```
